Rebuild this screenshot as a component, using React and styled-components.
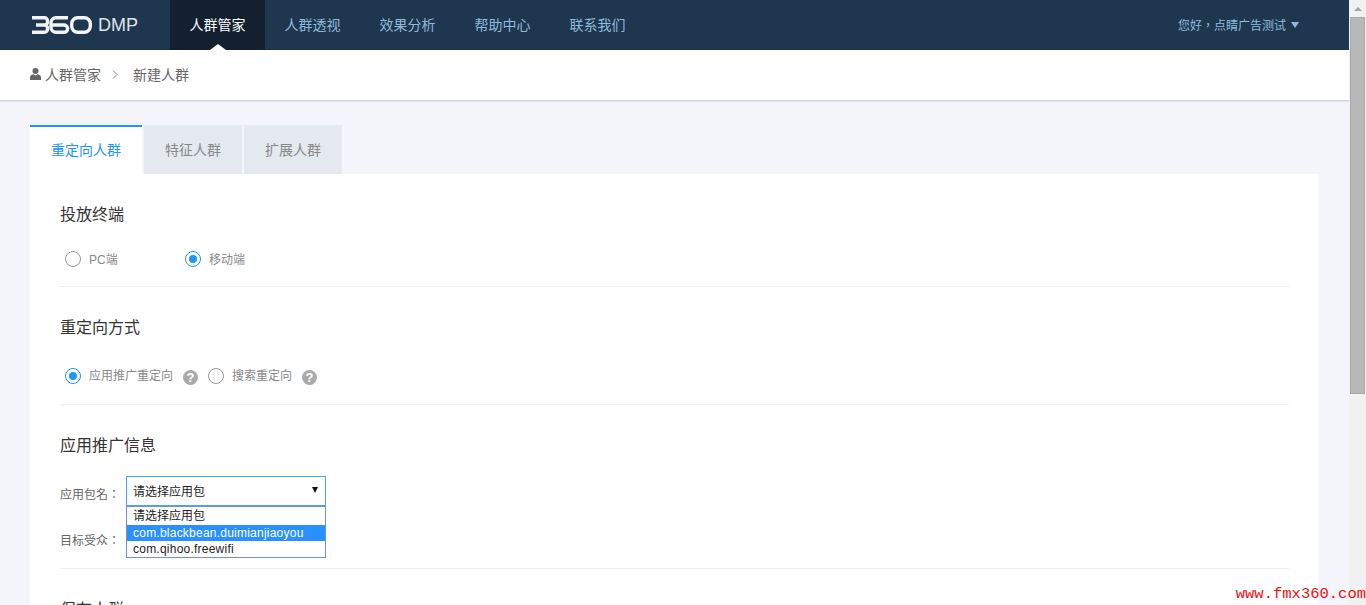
import styled, { createGlobalStyle } from "styled-components"

const CJK_CENTERED = `"Liberation Sans", "Noto Sans CJK TC", sans-serif`

const GlobalStyle = createGlobalStyle`
    html, body {
        margin: 0;
        height: 100%;
        overflow: hidden;
    }
    body {
        font-family: "Liberation Sans", "Noto Sans CJK SC", sans-serif;
        background: #f4f5fa;
    }
`

const Shell = styled.div`
    display: flex;
    width: 1366px;
    height: 605px;
    overflow: hidden;
    position: relative;
`

const Page = styled.div`
    flex: 1;
    min-width: 0;
    height: 605px;
    overflow: hidden;
    background: #f4f5fa;
`

const Header = styled.header`
    display: flex;
    align-items: center;
    height: 50px;
    background: #1f364f;
    padding-left: 32px;
`

const Logo = styled.div`
    display: flex;
    align-items: center;
    gap: 6px;
    width: 138px;
    color: #dfe3e8;
    font-size: 18px;
`

const Nav = styled.nav`
    display: flex;
    height: 50px;
`

const NavItem = styled.a`
    position: relative;
    display: flex;
    align-items: center;
    justify-content: center;
    box-sizing: border-box;
    width: 95px;
    padding-bottom: 2px;
    font-size: 14px;
    color: ${p => (p.$active ? "#ffffff" : "#8ebbdc")};
    background: ${p => (p.$active ? "#12202f" : "transparent")};
    ${p => p.$active && `
        &::after {
            content: "";
            position: absolute;
            bottom: 0;
            left: 40px;
            border-left: 8px solid transparent;
            border-right: 8px solid transparent;
            border-bottom: 6px solid #fff;
        }
    `}
`

const User = styled.div`
    display: flex;
    align-items: center;
    gap: 5px;
    margin-left: auto;
    padding: 0 50px 2px 0;
    font-family: ${CJK_CENTERED};
    font-size: 12px;
    color: #8ebbdc;
`

const Caret = styled.span`
    border-left: 4px solid transparent;
    border-right: 4px solid transparent;
    border-top: 6px solid #8ebbdc;
    margin-top: 2px;
`

const Crumbs = styled.div`
    display: flex;
    align-items: center;
    box-sizing: border-box;
    height: 50px;
    padding: 0 0 2px 30px;
    background: #fff;
    box-shadow: 0 1px 2px rgba(0, 0, 0, 0.2);
    font-size: 14px;
    color: #666;
`

const CrumbSep = styled.span`
    margin: 0 15px 0 11px;
    display: flex;
`

const Main = styled.main`
    padding: 25px 30px 0;
`

const Tabs = styled.div`
    display: flex;
    gap: 2px;
`

const Tab = styled.div`
    display: flex;
    align-items: center;
    justify-content: center;
    box-sizing: border-box;
    width: ${p => (p.$active ? "112px" : "98px")};
    height: 49px;
    padding-bottom: ${p => (p.$active ? "3px" : "2px")};
    font-size: 14px;
    color: ${p => (p.$active ? "#2196f3" : "#888")};
    background: ${p => (p.$active ? "#fff" : "#e4e8ef")};
    border-top: ${p => (p.$active ? "2px solid #2196f3" : "none")};
`

const Card = styled.div`
    background: #fff;
    padding: 0 30px;
`

const Section = styled.section`
    height: ${p => p.$height}px;
    box-sizing: border-box;
    padding-top: 30px;
    border-bottom: 1px solid #eceef0;
`

const Title = styled.h3`
    margin: 0;
    font-size: 16px;
    font-weight: normal;
    line-height: 22px;
    color: #333;
`

const RadioRow = styled.div`
    display: flex;
    align-items: center;
    padding-left: 5px;
    margin-top: ${p => p.$top}px;
`

const RadioItem = styled.label`
    display: flex;
    align-items: center;
    gap: 8px;
    font-size: 12px;
    color: #888;
    width: ${p => p.$width || "auto"};
`

const RadioText = styled.span`
    margin-top: -2px;
`

const RadioDot = styled.span`
    box-sizing: border-box;
    display: flex;
    align-items: center;
    justify-content: center;
    width: 16px;
    height: 16px;
    border-radius: 50%;
    border: 1px solid ${p => (p.$on ? "#2196f3" : "#999")};
    &::after {
        content: "";
        width: 8px;
        height: 8px;
        border-radius: 50%;
        background: ${p => (p.$on ? "#2196f3" : "transparent")};
    }
`

const Help = styled.span`
    display: flex;
    align-items: center;
    justify-content: center;
    width: 15px;
    height: 15px;
    border-radius: 50%;
    background: #aaa;
    color: #fff;
    font-size: 13px;
    font-weight: bold;
    margin: 4px 10px 0 10px;
`

const FormRow = styled.div`
    display: flex;
    align-items: center;
    height: 30px;
    margin-top: ${p => p.$top}px;
    font-size: 12px;
    color: #666;
`

const FormLabel = styled.span`
    width: 66px;
    padding-top: ${p => p.$shift || 0}px;
    font-family: ${CJK_CENTERED};
`

const SelectWrap = styled.div`
    position: relative;
    width: 200px;
    height: 30px;
`

const SelectBox = styled.div`
    box-sizing: border-box;
    display: flex;
    align-items: center;
    justify-content: space-between;
    height: 30px;
    padding: 0 7px 2px 6px;
    border: 1px solid #46a6f5;
    font-size: 12px;
    color: #222;
`

const Arrow = styled.span`
    border-left: 3.5px solid transparent;
    border-right: 3.5px solid transparent;
    border-top: 6px solid #111;
`

const Dropdown = styled.ul`
    position: absolute;
    top: 30px;
    left: 0;
    right: 0;
    box-sizing: border-box;
    z-index: 2;
    margin: 0;
    padding: 0;
    list-style: none;
    background: #fff;
    border: 1px solid #6f93d0;
    font-size: 12px;
    letter-spacing: 0.23px;
`

const Option = styled.li`
    height: 16px;
    line-height: 16px;
    padding-left: 6px;
    color: ${p => (p.$selected ? "#fff" : "#222")};
    background: ${p => (p.$selected ? "#2a8fff" : "transparent")};
    &:first-child {
        height: 18px;
        line-height: 18px;
        letter-spacing: 0;
    }
`

const Scrollbar = styled.div`
    display: flex;
    flex-direction: column;
    align-items: center;
    width: 17px;
    background: #f1f1f1;
`

const ScrollUp = styled.span`
    margin-top: 7px;
    border-left: 4px solid transparent;
    border-right: 4px solid transparent;
    border-bottom: 4px solid #a3a3a3;
`

const ScrollThumb = styled.div`
    box-sizing: border-box;
    width: 15px;
    height: 377px;
    margin-top: 6px;
    background: #b9b9b9;
    border: 1px solid #a8a8a8;
`

const Watermark = styled.div`
    position: absolute;
    right: 0;
    bottom: 2px;
    z-index: 3;
    font-family: "Liberation Mono", monospace;
    font-size: 15.5px;
    line-height: 18px;
    color: #f01010;
    white-space: nowrap;
`

function LogoMark() {
    return (
        <svg width="60" height="18" viewBox="0 0 60 18" fill="none" stroke="#f2f4f6" strokeWidth="3.4">
            <path d="M0 1.7h12.5a3 3 0 0 1 3 3v1.3a3 3 0 0 1-3 3H4M12.5 9a3 3 0 0 1 3 3v1.3a3 3 0 0 1-3 3H0" />
            <path d="M36 1.7H24a5 5 0 0 0-5 5v4.6a5 5 0 0 0 5 5h8a3.6 3.6 0 0 0 3.6-3.6v-.4A3.6 3.6 0 0 0 32 9H19" />
            <rect x="39.7" y="1.7" width="18.6" height="14.6" rx="6" />
        </svg>
    )
}

function PersonIcon() {
    return (
        <svg width="11" height="12" viewBox="0 0 11 12" fill="#666" style={{ marginRight: 4 }}>
            <circle cx="5.5" cy="3" r="3" />
            <path d="M0 12V9.2C0 7.6 1.5 6.6 3.4 6.2L5.5 7.6 7.6 6.2C9.5 6.6 11 7.6 11 9.2V12Z" />
        </svg>
    )
}

export default function App() {
    return (
        <Shell>
            <GlobalStyle />
            <Page>
                <Header>
                    <Logo>
                        <LogoMark />
                        <span>DMP</span>
                    </Logo>
                    <Nav>
                        <NavItem $active>人群管家</NavItem>
                        <NavItem>人群透视</NavItem>
                        <NavItem>效果分析</NavItem>
                        <NavItem>帮助中心</NavItem>
                        <NavItem>联系我们</NavItem>
                    </Nav>
                    <User>
                        您好，点睛广告测试
                        <Caret />
                    </User>
                </Header>
                <Crumbs>
                    <PersonIcon />
                    人群管家
                    <CrumbSep>
                        <svg width="6" height="9" viewBox="0 0 6 9" fill="none" stroke="#888">
                            <path d="M1 .5l4 4-4 4" />
                        </svg>
                    </CrumbSep>
                    新建人群
                </Crumbs>
                <Main>
                    <Tabs>
                        <Tab $active>重定向人群</Tab>
                        <Tab>特征人群</Tab>
                        <Tab>扩展人群</Tab>
                    </Tabs>
                    <Card>
                        <Section $height={113}>
                            <Title>投放终端</Title>
                            <RadioRow $top={25}>
                                <RadioItem $width="120px"><RadioDot /><RadioText>PC端</RadioText></RadioItem>
                                <RadioItem><RadioDot $on /><RadioText>移动端</RadioText></RadioItem>
                            </RadioRow>
                        </Section>
                        <Section $height={118}>
                            <Title>重定向方式</Title>
                            <RadioRow $top={27}>
                                <RadioItem><RadioDot $on /><RadioText>应用推广重定向</RadioText></RadioItem>
                                <Help>?</Help>
                                <RadioItem><RadioDot /><RadioText>搜索重定向</RadioText></RadioItem>
                                <Help>?</Help>
                            </RadioRow>
                        </Section>
                        <Section $height={164}>
                            <Title>应用推广信息</Title>
                            <FormRow $top={19}>
                                <FormLabel $shift={4}>应用包名：</FormLabel>
                                <SelectWrap>
                                    <SelectBox>
                                        请选择应用包
                                        <Arrow />
                                    </SelectBox>
                                    <Dropdown>
                                        <Option>请选择应用包</Option>
                                        <Option $selected>com.blackbean.duimianjiaoyou</Option>
                                        <Option>com.qihoo.freewifi</Option>
                                    </Dropdown>
                                </SelectWrap>
                            </FormRow>
                            <FormRow $top={18}>
                                <FormLabel>目标受众：</FormLabel>
                            </FormRow>
                        </Section>
                        <Section $height={120}>
                            <Title>保存人群</Title>
                        </Section>
                    </Card>
                </Main>
            </Page>
            <Scrollbar>
                <ScrollUp />
                <ScrollThumb />
            </Scrollbar>
            <Watermark>www.fmx360.com</Watermark>
        </Shell>
    )
}
